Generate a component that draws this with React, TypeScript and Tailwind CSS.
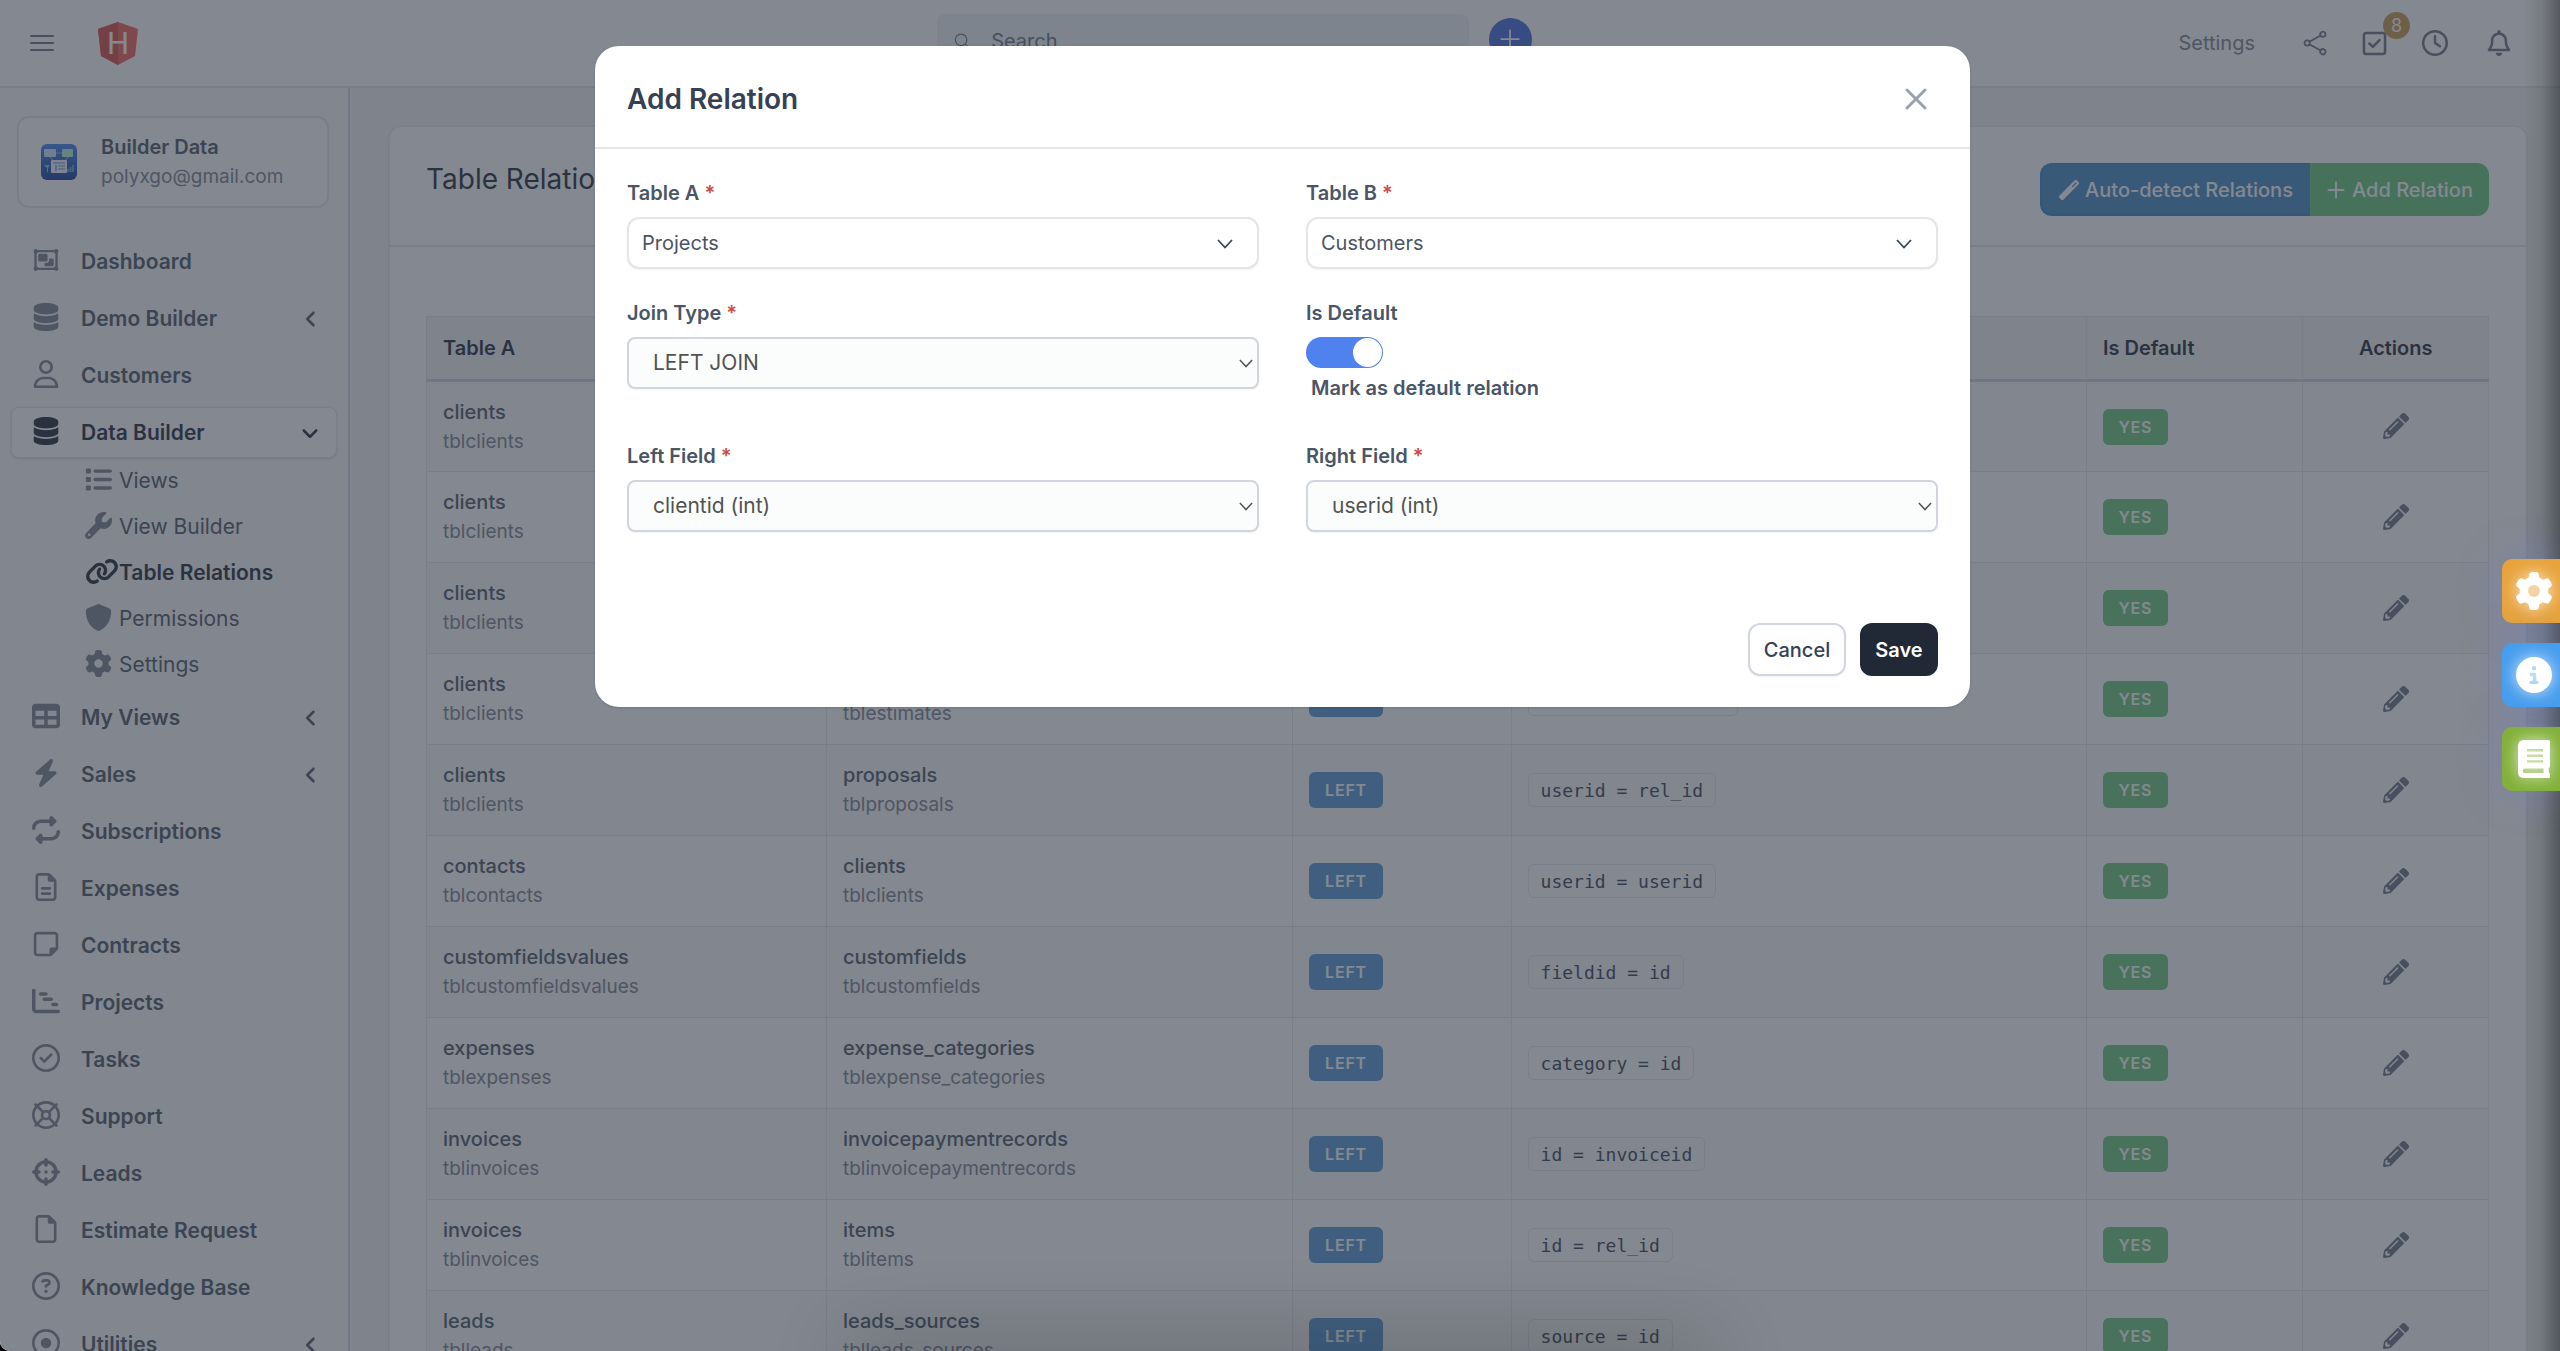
import type { ReactNode } from "react";
import type { IconType } from "react-icons";
import { FaPencilAlt } from "react-icons/fa";
import {
  FaAngleDown,
  FaAngleLeft,
  FaBolt,
  FaChartGantt,
  FaCircleInfo,
  FaCrosshairs,
  FaDatabase,
  FaGear,
  FaLink,
  FaList,
  FaRegBell,
  FaRegCircleCheck,
  FaRegCircleDot,
  FaRegCircleQuestion,
  FaRegClock,
  FaRegFile,
  FaRegFileLines,
  FaRegLifeRing,
  FaRegNoteSticky,
  FaRegObjectGroup,
  FaRegSquareCheck,
  FaRegUser,
  FaRepeat,
  FaShield,
  FaTable,
  FaWandMagic,
  FaWrench,
} from "react-icons/fa6";
import { HiOutlineBars3, HiOutlineMagnifyingGlass, HiOutlinePlus, HiOutlineShare } from "react-icons/hi2";

type NavEntry = { label: string; icon: IconType; more?: boolean };

const navTop: NavEntry[] = [
  { label: "Dashboard", icon: FaRegObjectGroup },
  { label: "Demo Builder", icon: FaDatabase, more: true },
  { label: "Customers", icon: FaRegUser },
];

const subNav: { label: string; icon: IconType; active?: boolean }[] = [
  { label: "Views", icon: FaList },
  { label: "View Builder", icon: FaWrench },
  { label: "Table Relations", icon: FaLink, active: true },
  { label: "Permissions", icon: FaShield },
  { label: "Settings", icon: FaGear },
];

const navBottom: NavEntry[] = [
  { label: "My Views", icon: FaTable, more: true },
  { label: "Sales", icon: FaBolt, more: true },
  { label: "Subscriptions", icon: FaRepeat },
  { label: "Expenses", icon: FaRegFileLines },
  { label: "Contracts", icon: FaRegNoteSticky },
  { label: "Projects", icon: FaChartGantt },
  { label: "Tasks", icon: FaRegCircleCheck },
  { label: "Support", icon: FaRegLifeRing },
  { label: "Leads", icon: FaCrosshairs },
  { label: "Estimate Request", icon: FaRegFile },
  { label: "Knowledge Base", icon: FaRegCircleQuestion },
  { label: "Utilities", icon: FaRegCircleDot, more: true },
];

const relations: { a: string; b: string; on: string }[] = [
  { a: "clients", b: "contacts", on: "userid = userid" },
  { a: "clients", b: "contracts", on: "userid = client" },
  { a: "clients", b: "creditnotes", on: "userid = clientid" },
  { a: "clients", b: "estimates", on: "userid = clientid" },
  { a: "clients", b: "proposals", on: "userid = rel_id" },
  { a: "contacts", b: "clients", on: "userid = userid" },
  { a: "customfieldsvalues", b: "customfields", on: "fieldid = id" },
  { a: "expenses", b: "expense_categories", on: "category = id" },
  { a: "invoices", b: "invoicepaymentrecords", on: "id = invoiceid" },
  { a: "invoices", b: "items", on: "id = rel_id" },
  { a: "leads", b: "leads_sources", on: "source = id" },
];

function Logo() {
  return (
    <svg viewBox="0 0 40 43" className="h-[43px] w-10" aria-label="Home">
      <path d="M20 0 40 7 37 34 20 43 3 34 0 7Z" fill="#f0605a" />
      <path d="M20 0V43L3 34 0 7Z" fill="#d84c48" />
      <text x="20" y="32" textAnchor="middle" fontFamily="Roboto, sans-serif" fontSize="31" fill="#ffffff">
        H
      </text>
    </svg>
  );
}

function BuilderBadge() {
  return (
    <svg viewBox="0 0 36 36" className="size-9 shrink-0" aria-hidden="true">
      <defs>
        <linearGradient id="badge" x1="0" y1="0" x2="0" y2="1">
          <stop offset="0" stopColor="#3f83ee" />
          <stop offset="1" stopColor="#183c96" />
        </linearGradient>
      </defs>
      <rect width="36" height="36" rx="6" fill="url(#badge)" />
      <rect x="3" y="5" width="12" height="8" rx="1" fill="#cfe4ff" />
      <rect x="21" y="5" width="11" height="8" rx="1" fill="#b8f0dd" />
      <path d="M15 9h6M9 13l4 4M27 13l-3 4" stroke="#8db8ff" strokeWidth="1" fill="none" />
      <rect x="10" y="16" width="16" height="13" rx="1" fill="#f3f8ff" />
      <path d="M12 19h12M15 21v6M17 22h7M17 25h7" stroke="#5c8be0" strokeWidth="1.2" />
      <path d="M3 21h6l-2 3v4H6v-4Z" fill="#5cc9e8" />
      <path d="M27 28v-3M29.500 28v-5M32 28v-7" stroke="#5cb6f0" strokeWidth="1.600" />
    </svg>
  );
}

function BookIcon() {
  return (
    <svg
      viewBox="0 0 32 38"
      className="h-[42px] w-8 drop-shadow-[0_0_8px_rgba(255,255,255,0.8)]"
      fill="none"
      aria-hidden="true"
    >
      <path
        fill="#ffffff"
        fillRule="evenodd"
        d="M6 0H30.500Q32 0 32 1.500V26Q32 27.500 30.800 28.200V32.600Q32 33 32 34.500V36.500Q32 38 30.500 38H6Q0 38 0 32V6Q0 0 6 0ZM7 28.500Q4.600 28.500 4.600 30.700 4.600 33 7 33H25.500V28.500ZM9 9v2.400h16V9ZM9 14.600V17h16v-2.400ZM9 20.200v2.400h16v-2.400Z"
      />
    </svg>
  );
}

function NavLink({ entry }: { entry: NavEntry }) {
  const Icon = entry.icon;
  return (
    <a href="#" className="mb-1.5 flex h-[51px] items-center pr-4 pl-[21px] text-[21px] font-semibold text-gray-600">
      <span className="mr-[21px] mb-1 flex w-7 shrink-0 justify-center text-[#7b8290]">
        <Icon className="size-7" />
      </span>
      <span className="flex-1">{entry.label}</span>
      {entry.more && <FaAngleLeft className="size-5" />}
    </a>
  );
}

function Sidebar() {
  return (
    <aside className="w-[350px] shrink-0 border-r-2 border-slate-300 bg-gray-50">
      <div className="mt-7 mr-[19px] ml-[17px] flex h-[92px] items-center rounded-xl border-2 border-slate-200 bg-white pl-[22px]">
        <BuilderBadge />
        <div className="ml-6 leading-[30px]">
          <p className="text-[20px] font-semibold text-gray-600">Builder Data</p>
          <p className="text-[19px] text-[#7b8290]">polyxgo@gmail.com</p>
        </div>
      </div>
      <nav className="mt-7 px-[11px]">
        {navTop.map((entry) => (
          <NavLink key={entry.label} entry={entry} />
        ))}
        <a
          href="#"
          className="flex h-[51px] items-center rounded-lg border border-slate-200 bg-white pr-4 pl-5 text-[21px] font-semibold text-gray-800 shadow-sm"
        >
          <span className="mr-[21px] mb-1 flex w-7 shrink-0 justify-center">
            <FaDatabase className="size-7" />
          </span>
          <span className="flex-1">Data Builder</span>
          <FaAngleDown className="size-5" />
        </a>
        <ul className="mb-1">
          {subNav.map(({ label, icon: Icon, active }) => (
            <li key={label}>
              <a
                href="#"
                className={
                  active
                    ? "flex h-[46px] items-center pl-[74px] text-[21px] font-semibold text-gray-800"
                    : "flex h-[46px] items-center pl-[74px] text-[21px] text-gray-600"
                }
              >
                <span className={active ? "mb-1 w-[34px]" : "mb-1 w-[34px] text-[#7b8290]"}>
                  <Icon className={active ? "h-[27px] w-[34px]" : "size-[27px]"} />
                </span>
                {label}
              </a>
            </li>
          ))}
        </ul>
        {navBottom.map((entry) => (
          <NavLink key={entry.label} entry={entry} />
        ))}
      </nav>
    </aside>
  );
}

function TopBar() {
  return (
    <header className="flex h-[88px] shrink-0 items-center border-b-2 border-slate-200 bg-white pr-12 pl-[26px] text-gray-500">
      <button type="button" aria-label="Toggle menu">
        <HiOutlineBars3 className="size-8" />
      </button>
      <a href="#" className="ml-10">
        <Logo />
      </a>
      <div className="flex flex-1 items-center justify-center gap-5 self-start pt-3.5 pr-6 pl-44">
        <label className="flex h-[54px] w-[532px] items-center gap-5 rounded-lg bg-slate-100 px-4">
          <HiOutlineMagnifyingGlass className="size-5" />
          <input
            type="search"
            aria-label="Search"
            placeholder="Search"
            className="w-full bg-transparent text-[20px] outline-none placeholder:text-gray-500"
          />
        </label>
        <button
          type="button"
          aria-label="Quick create"
          className="mb-1 flex size-[43px] items-center justify-center rounded-full bg-[#4169e1] text-white"
        >
          <HiOutlinePlus className="size-7" />
        </button>
      </div>
      <div className="flex items-center">
        <a href="#" className="text-[20px] text-[#7b8290]">
          Settings
        </a>
        <button type="button" aria-label="Share" className="ml-[46px]">
          <HiOutlineShare className="size-7" />
        </button>
        <button type="button" aria-label="Tasks" className="relative ml-8">
          <FaRegSquareCheck className="size-[27px]" />
          <span className="absolute -top-[18px] left-[22px] flex size-[27px] items-center justify-center rounded-full bg-[#c99a4b] text-[18px] text-white">
            8
          </span>
        </button>
        <button type="button" aria-label="Timers" className="ml-[34px]">
          <FaRegClock className="size-[26px]" />
        </button>
        <button type="button" aria-label="Notifications" className="ml-[38px]">
          <FaRegBell className="size-[26px]" />
        </button>
      </div>
    </header>
  );
}

function TableName({ name }: { name: string }) {
  return (
    <td className="border border-slate-200 px-4 leading-[30px]">
      <p className="text-[20px] font-medium text-gray-600">{name}</p>
      <p className="text-[19px] text-[#7b8290]">tbl{name}</p>
    </td>
  );
}

function RelationsTable() {
  return (
    <table className="w-full table-fixed border-collapse border border-slate-200 text-[20px]">
      <colgroup>
        <col className="w-[19.4%]" />
        <col className="w-[22.6%]" />
        <col className="w-[10.6%]" />
        <col className="w-[27.9%]" />
        <col className="w-[10.5%]" />
        <col className="w-[9%]" />
      </colgroup>
      <thead>
        <tr className="h-16 border-b-3 border-slate-300 bg-gray-100 text-left text-gray-800">
          {["Table A", "Table B", "Join Type", "Join Condition", "Is Default"].map((title) => (
            <th key={title} className="border-x border-slate-200 px-4 font-semibold">
              {title}
            </th>
          ))}
          <th className="border-x border-slate-200 text-center font-semibold">Actions</th>
        </tr>
      </thead>
      <tbody>
        {relations.map((row) => (
          <tr key={row.a + row.b} className="h-[91px] odd:bg-gray-50">
            <TableName name={row.a} />
            <TableName name={row.b} />
            <td className="border border-slate-200 px-4">
              <span className="inline-flex h-9 w-[74px] items-center justify-center rounded-md bg-[#5699d8] text-[16px] font-semibold tracking-wider text-white">
                LEFT
              </span>
            </td>
            <td className="border border-slate-200 px-4">
              <code className="inline-flex h-[34px] items-center rounded-md border border-slate-200 px-3 font-['DejaVu_Sans_Mono',monospace] text-[18px] text-gray-700">
                {row.on}
              </code>
            </td>
            <td className="border border-slate-200 px-4">
              <span className="inline-flex h-9 w-[65px] items-center justify-center rounded-md bg-[#69c77e] text-[16px] font-semibold tracking-wider text-white">
                YES
              </span>
            </td>
            <td className="border border-slate-200 pb-1 text-center">
              <button type="button" aria-label={"Edit " + row.a + " to " + row.b} className="align-middle text-gray-500">
                <FaPencilAlt className="size-[26px]" />
              </button>
            </td>
          </tr>
        ))}
      </tbody>
    </table>
  );
}

function Field({
  id,
  label,
  value,
  variant,
}: {
  id: string;
  label: string;
  value: string;
  variant: "picker" | "native";
}) {
  const picker = variant === "picker";
  return (
    <div>
      <label htmlFor={id} className="mb-2 block text-[20px] leading-[31px] font-semibold text-gray-600">
        {label} <span className="text-[#cf4a43]">*</span>
      </label>
      <div className="relative">
        <select
          id={id}
          defaultValue={value}
          className={
            picker
              ? "h-[52px] w-full appearance-none rounded-xl border-2 border-neutral-200 bg-white pl-[13px] text-[20px] text-gray-600 shadow-xs"
              : "h-[52px] w-full appearance-none rounded-lg border-2 border-gray-300 bg-[#fbfdfd] pl-6 text-[21px] text-neutral-600 shadow-xs"
          }
        >
          <option>{value}</option>
        </select>
        <svg
          viewBox="0 0 16 10"
          fill="none"
          stroke="currentColor"
          strokeWidth="1.7"
          aria-hidden="true"
          className={
            picker
              ? "pointer-events-none absolute top-[22px] right-[26px] h-2.5 w-4 text-gray-700"
              : "pointer-events-none absolute top-[22px] right-1.5 h-[9px] w-3.5 text-neutral-600"
          }
        >
          <path d="M1 1 8 8.500 15 1" />
        </svg>
      </div>
    </div>
  );
}

function RelationDialog() {
  return (
    <div className="absolute inset-0 flex items-start justify-center bg-[#323946]/60 pt-[46px] pl-[5px]">
      <section
        role="dialog"
        aria-modal="true"
        aria-labelledby="dialog-title"
        className="w-full max-w-[1375px] rounded-3xl bg-white shadow-sm"
      >
        <header className="flex h-[103px] items-center justify-between border-b-2 border-neutral-200 pt-1 pr-[43px] pl-8">
          <h2 id="dialog-title" className="text-[28px] font-semibold text-gray-700">
            Add Relation
          </h2>
          <button type="button" aria-label="Close" className="text-gray-400">
            <svg viewBox="0 0 22 22" className="size-[22px]" fill="none" stroke="currentColor" strokeWidth="3" strokeLinecap="round">
              <path d="M2 2 20 20M20 2 2 20" />
            </svg>
          </button>
        </header>
        <form onSubmit={(event) => event.preventDefault()} className="px-8 pt-[29px] pb-[31px]">
          <div className="grid grid-cols-2 gap-x-[47px] gap-y-[29px]">
            <Field id="table-a" label="Table A" value="Projects" variant="picker" />
            <Field id="table-b" label="Table B" value="Customers" variant="picker" />
            <Field id="join-type" label="Join Type" value="LEFT JOIN" variant="native" />
            <div className="pb-2 text-[20px] leading-[31px] font-semibold text-gray-600">
              <p className="mb-2">Is Default</p>
              <input
                id="is-default"
                type="checkbox"
                role="switch"
                defaultChecked
                className="flex h-[31px] w-[77px] appearance-none items-center justify-end rounded-full bg-[#4f82ee] p-px before:size-[29px] before:rounded-full before:bg-white"
              />
              <label htmlFor="is-default" className="mt-[5px] ml-[5px] block">
                Mark as default relation
              </label>
            </div>
            <Field id="left-field" label="Left Field" value="clientid (int)" variant="native" />
            <Field id="right-field" label="Right Field" value="userid (int)" variant="native" />
          </div>
          <div className="mt-[91px] flex justify-end gap-3.5 text-[20px]">
            <button
              type="button"
              className="h-[53px] w-[98px] rounded-xl border-2 border-gray-300 bg-white font-medium text-gray-700 shadow-xs"
            >
              Cancel
            </button>
            <button type="submit" className="h-[53px] w-[78px] rounded-xl bg-[#212936] font-semibold text-white">
              Save
            </button>
          </div>
        </form>
      </section>
    </div>
  );
}

function SideTab({ label, color, children }: { label: string; color: string; children: ReactNode }) {
  return (
    <button
      type="button"
      aria-label={label}
      className={
        "flex h-16 w-[58px] items-center justify-center rounded-l-[10px] pl-1.5 text-white shadow-[0_0_40px_rgba(110,130,220,0.4)] " +
        color
      }
    >
      {children}
    </button>
  );
}

export default function App() {
  return (
    <div className="h-screen bg-black font-[Inter,sans-serif]">
      <div className="relative flex h-full flex-col overflow-hidden rounded-bl-[10px] bg-gray-100">
        <TopBar />
        <div className="flex min-h-0 flex-1">
          <Sidebar />
          <main className="min-w-0 flex-1 pt-[38px] pr-[33px] pl-[39px]">
            <div className="rounded-t-xl border border-slate-200 bg-white shadow-sm">
              <div className="flex h-[120px] items-start justify-between border-b-2 border-slate-200 pt-9 pr-[37px] pl-9">
                <h1 className="text-[28px] leading-8 text-gray-800">Table Relations</h1>
                <div className="flex text-[20px] font-medium text-white">
                  <button
                    type="button"
                    className="flex h-[53px] w-[270px] items-center justify-center gap-1.5 rounded-l-xl border-2 border-r-0 border-[#3485cc] bg-[#418bc2]"
                  >
                    <FaWandMagic className="size-5" />
                    Auto-detect Relations
                  </button>
                  <button
                    type="button"
                    className="flex h-[53px] w-[179px] items-center justify-center gap-1 rounded-r-xl border-2 border-l-0 border-[#5cc97f] bg-[#65c67a]"
                  >
                    <HiOutlinePlus className="size-6 stroke-2" />
                    Add Relation
                  </button>
                </div>
              </div>
              <div className="pt-[69px] pr-[37px] pl-9">
                <RelationsTable />
              </div>
            </div>
          </main>
        </div>
        <RelationDialog />
        <div className="pointer-events-none absolute inset-y-0 right-0 w-9 bg-linear-to-r from-transparent via-black/10 to-black/35" />
        <div className="pointer-events-none absolute inset-x-[34%] -bottom-5 h-2.5 rounded-full shadow-[0_0_80px_24px_rgba(0,0,0,0.18)]" />
        <div className="absolute top-[559px] right-0 flex flex-col gap-5">
          <SideTab label="Settings" color="bg-[#e8a33b]">
            <FaGear className="size-[38px] drop-shadow-[0_0_8px_rgba(255,255,255,0.8)]" />
          </SideTab>
          <SideTab label="Information" color="bg-[#479eee]">
            <FaCircleInfo className="size-9 drop-shadow-[0_0_8px_rgba(255,255,255,0.8)]" />
          </SideTab>
          <SideTab label="Documentation" color="bg-[#82b038]">
            <BookIcon />
          </SideTab>
        </div>
      </div>
    </div>
  );
}
